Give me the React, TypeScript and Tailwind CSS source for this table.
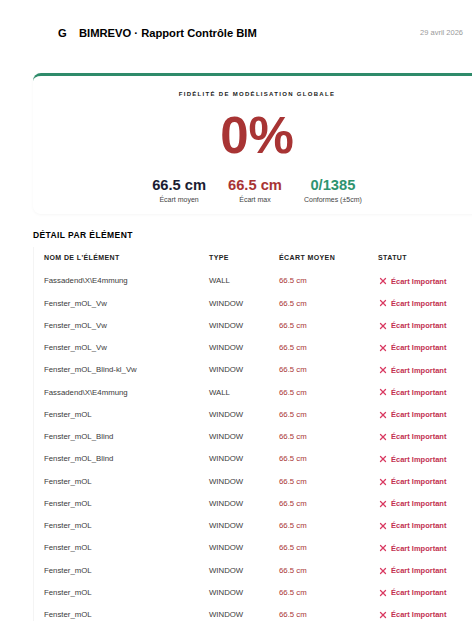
import { X } from "lucide-react";

const rows: { name: string; type: string }[] = [
  { name: "Fassadend\\X\\E4mmung", type: "WALL" },
  { name: "Fenster_mOL_Vw", type: "WINDOW" },
  { name: "Fenster_mOL_Vw", type: "WINDOW" },
  { name: "Fenster_mOL_Vw", type: "WINDOW" },
  { name: "Fenster_mOL_Blind-kl_Vw", type: "WINDOW" },
  { name: "Fassadend\\X\\E4mmung", type: "WALL" },
  { name: "Fenster_mOL", type: "WINDOW" },
  { name: "Fenster_mOL_Blind", type: "WINDOW" },
  { name: "Fenster_mOL_Blind", type: "WINDOW" },
  { name: "Fenster_mOL", type: "WINDOW" },
  { name: "Fenster_mOL", type: "WINDOW" },
  { name: "Fenster_mOL", type: "WINDOW" },
  { name: "Fenster_mOL", type: "WINDOW" },
  { name: "Fenster_mOL", type: "WINDOW" },
  { name: "Fenster_mOL", type: "WINDOW" },
  { name: "Fenster_mOL", type: "WINDOW" },
];

function Stat({ value, label, color }: { value: string; label: string; color: string }) {
  return (
    <div className="flex flex-col items-center">
      <span className={`text-[14.7px] font-bold leading-[18px] ${color}`}>{value}</span>
      <span className="mt-[1px] text-[7px] leading-[9px] text-[#444]">{label}</span>
    </div>
  );
}

export default function App() {
  return (
    <div className="h-[621px] w-[472px] overflow-hidden bg-white font-['Liberation_Sans',Arial,sans-serif]">
      <div className="ml-[33px] w-[448px]">
        {/* header */}
        <div className="flex h-[73px] items-start justify-between pl-[25px] pr-[18px] pt-[27px]">
          <div className="flex items-center text-[11.2px] font-bold leading-[13px] text-black">
            <span className="w-[21px]">G</span>
            <span>BIMREVO · Rapport Contrôle BIM</span>
          </div>
          <span className="pt-[1px] text-[7.5px] leading-[10px] text-[#9a9a9a]">29 avril 2026</span>
        </div>

        {/* global score card */}
        <div className="flex h-[141px] flex-col items-center rounded-lg border-t-[3px] border-[#2e8b6a] bg-white shadow-[0_1px_3px_rgba(0,0,0,0.04)]">
          <p className="mt-[14px] text-[6px] font-bold uppercase leading-[8px] tracking-[1.3px] text-[#222]">
            Fidélité de modélisation globale
          </p>
          <p className="mt-[10px] text-[51px] font-bold leading-[56px] text-[#a83434]">0%</p>
          <div className="mt-[12px] flex justify-center gap-[22px]">
            <Stat value="66.5 cm" label="Écart moyen" color="text-[#1b1d33]" />
            <Stat value="66.5 cm" label="Écart max" color="text-[#a83434]" />
            <Stat value="0/1385" label="Conformes (±5cm)" color="text-[#2e9470]" />
          </div>
        </div>

        {/* detail table */}
        <h2 className="mt-[16px] text-[8.5px] font-bold uppercase leading-[10px] tracking-[0.4px] text-black">
          Détail par élément
        </h2>
        <div className="mt-[7px] border-l border-[#f4f4f4] px-[10px]">
          <div className="grid h-[23px] grid-cols-[165px_70px_99px_1fr] items-center text-[7px] font-bold uppercase tracking-[0.4px] text-[#222]">
            <span>Nom de l'élément</span>
            <span>Type</span>
            <span>Écart moyen</span>
            <span>Statut</span>
          </div>
          {rows.map((r, i) => (
            <div
              key={i}
              className="grid h-[22.27px] grid-cols-[165px_70px_99px_1fr] items-center text-[7.8px] text-[#3a3a3a]"
            >
              <span>{r.name}</span>
              <span>{r.type}</span>
              <span className="text-[#a83434]">66.5 cm</span>
              <span className="flex items-center gap-[3px] text-[7.5px] font-bold text-[#c23050]">
                <X size={10} strokeWidth={3} className="text-[#d93a62]" />
                Écart Important
              </span>
            </div>
          ))}
        </div>
      </div>
    </div>
  );
}
